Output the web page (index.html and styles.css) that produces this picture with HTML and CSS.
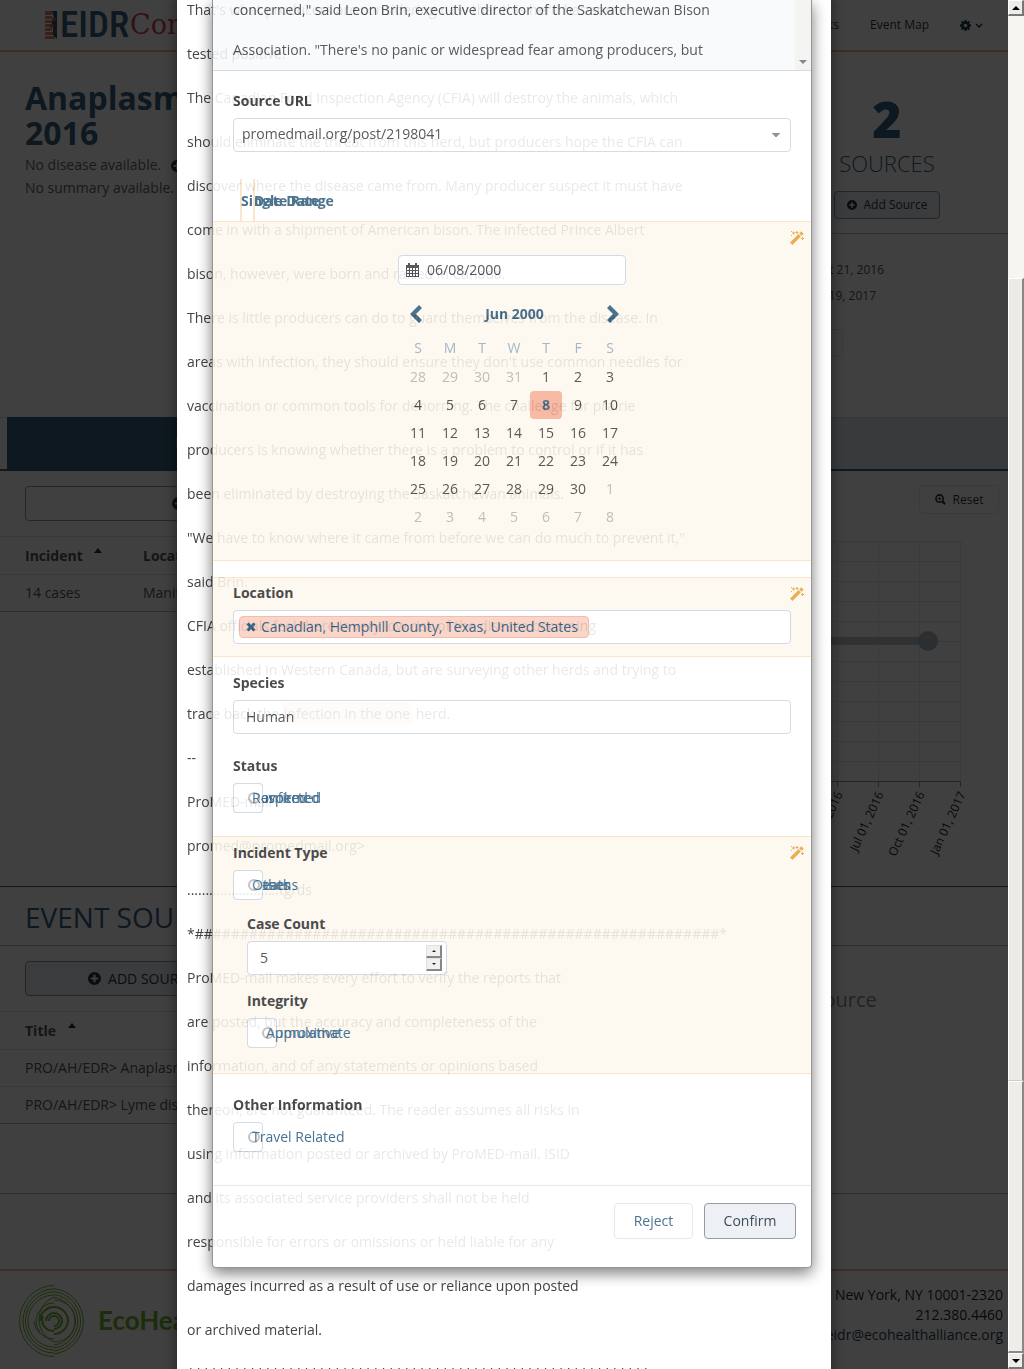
FILE: index.html
```html
<!DOCTYPE html>
<html lang="en">
<head>
<meta charset="utf-8">
<title>EIDR Connect</title>
<meta name="viewport" content="width=device-width, initial-scale=1">
<link rel="stylesheet" href="styles.css">
</head>
<body>
<svg class="defs" aria-hidden="true">
  <symbol id="plus" viewBox="0 0 12 12"><path fill-rule="evenodd" d="M6 0a6 6 0 1 0 0 12A6 6 0 0 0 6 0ZM5 2.600h2V5h2.400v2H7v2.400H5V7H2.600V5H5Z"/></symbol>
  <symbol id="wand" viewBox="0 0 14 14"><path d="M0 11.600 8.500 3.100l2.400 2.400L2.400 14ZM9.200 2.400 11.300.3l2.400 2.400-2.100 2.100ZM3 .6h1v1h1v1H4v1H3v-1H2v-1h1ZM6.500 0h1v1h1v1h-1v1h-1V2h-1V1h1ZM12 6h1v1h1v1h-1v1h-1V8h-1V7h1ZM1 0h1v1H1ZM1 4h1v1H1Z"/></symbol>
  <symbol id="chevron" viewBox="0 0 12 18"><path d="M3 0 12 9 3 18 0 15 6 9 0 3Z"/></symbol>
</svg>

<div class="page">
  <header class="topbar">
    <a class="brand" href="#">
      <svg class="brand-mark" width="12" height="28" viewBox="0 0 12 28" aria-hidden="true">
        <path fill="#d98963" d="M0 0h7v4H0zM0 5h7v3H0zM0 9h6v3H0zM0 13h6v3H0zM0 17h7v3H0zM0 21h8v3H0zM0 25h10v3H0z"/>
        <path fill="#2a5068" d="M7 0h5v28l-4-4V14L6 11l3-4Z"/>
        <circle cx="9" cy="8" r="2" fill="#d14b5e"/><circle cx="7" cy="15" r="2" fill="#d14b5e"/><circle cx="11" cy="20" r="1" fill="#d14b5e"/>
      </svg>
      <span class="brand-eidr">EIDR</span><span class="brand-connect">Connect</span>
    </a>
    <nav class="topnav">
      <a href="#">Events</a>
      <a href="#">Event Map</a>
      <a class="settings" href="#" aria-label="Settings">
        <svg width="11" height="11" viewBox="0 0 12 12"><path fill-rule="evenodd" d="M5 0h2l.3 1.600 1 .4L9.700 1 11 2.300 10 3.700l.4 1L12 5v2l-1.600.3-.4 1L11 9.700 9.700 11 8.300 10l-1 .4L7 12H5l-.3-1.600-1-.4L2.300 11 1 9.700 2 8.300l-.4-1L0 7V5l1.600-.3.4-1L1 2.300 2.300 1l1.400 1 1-.4ZM6 4a2 2 0 1 0 0 4 2 2 0 0 0 0-4Z"/></svg>
        <svg width="8" height="5" viewBox="0 0 8 5"><path d="m1 1 3 3 3-3" fill="none" stroke="currentColor" stroke-width="1.500"/></svg>
      </a>
    </nav>
  </header>

  <section class="summary">
    <div class="summary-text">
      <h1>Anaplasmosis<br>2016</h1>
      <p>No disease available. <svg class="icon" width="12" height="12"><use href="#plus"/></svg></p>
      <p>No summary available.</p>
    </div>
    <aside class="stats">
      <div class="stat">
        <strong>2</strong>
        <span>SOURCES</span>
        <button class="btn btn-small btn-fill" type="button"><svg class="icon" width="10" height="10"><use href="#plus"/></svg>Add Source</button>
      </div>
      <div class="dates">
        <p>Oct 21, 2016</p>
        <p>Jan 19, 2017</p>
        <button class="btn btn-small btn-details" type="button">Edit</button>
      </div>
    </aside>
  </section>

  <nav class="tabs">
    <a class="tab tab-on" href="#">Incidents</a>
    <a class="tab" href="#">Details</a>
  </nav>

  <section class="incidents">
    <div class="incident-list">
      <div class="tools"><button class="btn btn-wide" type="button"><svg class="icon" width="13" height="13"><use href="#plus"/></svg>Add Incident</button></div>
      <table class="list">
        <thead><tr><th class="col-name">Incident <span class="sort"></span></th><th>Location</th></tr></thead>
        <tbody><tr><td>14 cases</td><td>Manitoba</td></tr></tbody>
      </table>
    </div>
    <div class="plot">
      <button class="btn btn-small btn-reset" type="button"><svg class="icon" width="11" height="11" viewBox="0 0 12 12"><path d="m8 8 3 3" stroke="currentColor" stroke-width="2.500"/><circle cx="5" cy="5" r="4" fill="none" stroke="currentColor" stroke-width="1.800"/><path d="M5 3v4M3 5h4" stroke="currentColor"/></svg>Reset</button>
      <svg class="chart" width="220" height="330" viewBox="0 0 220 330">
        <path class="grid" d="M11.500 0V240M52.500 0V240M93.500 0V240M134.500 0V240M0 .5H134M0 20.500H134M0 40.500H134M0 60.500H134M0 80.500H134M0 100.500H134M0 120.500H134M0 140.500H134M0 160.500H134M0 180.500H134M0 200.500H134M0 220.500H134"/>
        <path class="axis" d="M0 240.500H134.500M11.500 240v6M52.500 240v6M93.500 240v6M134.500 240v6"/>
        <path class="span" d="M0 100H98"/><circle class="dot" cx="102" cy="100" r="10"/>
        <g class="ticks" text-anchor="end">
          <text transform="translate(17 253) rotate(-65)">Apr 01, 2016</text>
          <text transform="translate(58 253) rotate(-65)">Jul 01, 2016</text>
          <text transform="translate(99 253) rotate(-65)">Oct 01, 2016</text>
          <text transform="translate(140 253) rotate(-65)">Jan 01, 2017</text>
        </g>
      </svg>
    </div>
  </section>

  <section class="sources">
    <h2>EVENT SOURCES</h2>
    <div class="sources-body">
      <div class="source-list">
        <div class="tools"><button class="btn btn-source btn-fill" type="button"><svg class="icon" width="13" height="13"><use href="#plus"/></svg>ADD SOURCE</button></div>
        <table class="list">
          <thead><tr><th>Title <span class="sort"></span></th></tr></thead>
          <tbody><tr><td>PRO/AH/EDR&gt; Anaplasmosis</td></tr><tr><td>PRO/AH/EDR&gt; Lyme disease</td></tr></tbody>
        </table>
      </div>
      <p class="empty">Select a source</p>
    </div>
  </section>

  <footer class="footer">
    <a class="eco" href="#">
      <svg class="eco-rings" width="70" height="72" viewBox="-35 -36 70 72" aria-hidden="true">
        <path d="M0-35.500A34 35 0 0 0 0 35.500M0-32.500A33.500 33 0 0 1 0 33M0-32A31 32 0 0 0 0 32M0-29.500A30.500 30 0 0 1 0 30M0-29A28.500 29 0 0 0 0 29M0-26.500A27.500 27 0 0 1 0 27M0-26A26 26 0 0 0 0 26M0-23.500A24.500 24 0 0 1 0 24M0-24A23 24 0 0 0 0 21M0-21A21.500 21 0 0 1 0 21M0-18A18 18 0 0 0-14 11M-20 0A20 20 0 0 0 0 18"/>
        <path stroke-width="2" d="M-14 0A14 14 0 0 1 14 0A14 14 0 0 1 0 13M-11-5A11 11 0 0 0 0 10M-8 0A8 8 0 1 1 0 8M-5 0A5 5 0 1 1 0 5"/>
      </svg>
      <span>EcoHealth Alliance</span>
    </a>
    <address>
      New York, NY 10001-2320<br>212.380.4460<br><a href="#">eidr@ecohealthalliance.org</a>
    </address>
  </footer>
</div>

<div class="backdrop">
  <article class="article">
    <p>That's what producers are considering now that this herd has some</p>
    <p>tested positive.</p>
    <p>The Canadian Food Inspection Agency (CFIA) will destroy the animals, which</p>
    <p>should eliminate the threat from this herd, but producers hope the CFIA can</p>
    <p>discover where the disease came from. Many producer suspect it must have</p>
    <p>come in with a shipment of American bison. The infected Prince Albert</p>
    <p>bison, however, were born and raised in Canada.</p>
    <p>There is little producers can do to guard themselves from the disease. In</p>
    <p>areas with infection, they should ensure they don't use common needles for</p>
    <p>vaccination or common tools for dehorning. The challenge for prairie</p>
    <p>producers is knowing whether there is a problem to control or if it has</p>
    <p>been eliminated by destroying the Saskatchewan animals.</p>
    <p>"We have to know where it came from before we can do much to prevent it,"</p>
    <p>said Brin.</p>
    <p>CFIA officials feel there is very low risk of the disease becoming</p>
    <p>established in Western Canada, but are surveying other herds and trying to</p>
    <p>trace back the <mark>infection in the one</mark> herd.</p>
    <p>--</p>
    <p>ProMED-mail</p>
    <p>promed@promedmail.org&gt;</p>
    <p>.........................tg/ds</p>
    <p>*##########################################################*</p>
    <p>ProMED-mail makes every effort to verify the reports that</p>
    <p>are posted, but the accuracy and completeness of the</p>
    <p>information, and of any statements or opinions based</p>
    <p>thereon, are not guaranteed. The reader assumes all risks in</p>
    <p>using information posted or archived by ProMED-mail. ISID</p>
    <p>and its associated service providers shall not be held</p>
    <p>responsible for errors or omissions or held liable for any</p>
    <p>damages incurred as a result of use or reliance upon posted</p>
    <p>or archived material.</p>
    <p class="stars">************************************************************</p>
  </article>
</div>

<div class="dialog-layer">
  <form class="dialog" role="dialog" aria-label="Suggested incident">
    <div class="excerpt">
      <div class="excerpt-text">
        <p>concerned," said Leon Brin, executive director of the Saskatchewan Bison</p>
        <p>Association. "There's no panic or widespread fear among producers, but</p>
      </div>
      <div class="excerpt-bar"><span></span></div>
    </div>

    <div class="field field-url">
      <label for="url">Source URL</label>
      <select id="url" class="control select"><option>promedmail.org/post/2198041</option></select>
    </div>

    <div class="date-tabs">
      <button type="button">Single Date</button>
      <button type="button">Date Range</button>
    </div>

    <section class="suggested suggested-date">
      <svg class="wand" width="14" height="14"><use href="#wand"/></svg>
      <div class="picker">
        <div class="control date-box">
          <svg width="13" height="14" viewBox="0 0 13 14"><path fill-rule="evenodd" d="M0 2h2V0h2v2h5V0h2v2h2v12H0ZM1 5v2h2V5ZM4 5v2h2V5ZM7 5v2h2V5ZM10 5v2h2V5ZM1 8v2h2V8ZM4 8v2h2V8ZM7 8v2h2V8ZM10 8v2h2V8ZM1 11v2h2v-2ZM4 11v2h2v-2ZM7 11v2h2v-2ZM10 11v2h2v-2Z"/></svg>
          <input type="text" value="06/08/2000" aria-label="Date">
        </div>
        <div class="month">
          <button type="button" aria-label="Previous month"><svg class="flip" width="12" height="18"><use href="#chevron"/></svg></button>
          <strong>Jun 2000</strong>
          <button type="button" aria-label="Next month"><svg width="12" height="18"><use href="#chevron"/></svg></button>
        </div>
        <table class="days">
          <thead><tr><th>S</th><th>M</th><th>T</th><th>W</th><th>T</th><th>F</th><th>S</th></tr></thead>
          <tbody>
            <tr><td class="off">28</td><td class="off">29</td><td class="off">30</td><td class="off">31</td><td>1</td><td>2</td><td>3</td></tr>
            <tr><td>4</td><td>5</td><td>6</td><td>7</td><td class="on">8</td><td>9</td><td>10</td></tr>
            <tr><td>11</td><td>12</td><td>13</td><td>14</td><td>15</td><td>16</td><td>17</td></tr>
            <tr><td>18</td><td>19</td><td>20</td><td>21</td><td>22</td><td>23</td><td>24</td></tr>
            <tr><td>25</td><td>26</td><td>27</td><td>28</td><td>29</td><td>30</td><td class="off">1</td></tr>
            <tr><td class="off">2</td><td class="off">3</td><td class="off">4</td><td class="off">5</td><td class="off">6</td><td class="off">7</td><td class="off">8</td></tr>
          </tbody>
        </table>
      </div>
    </section>

    <section class="suggested suggested-location">
      <svg class="wand" width="14" height="14"><use href="#wand"/></svg>
      <h3>Location</h3>
      <div class="control tokens">
        <span class="token"><button type="button" aria-label="Remove"><svg width="10" height="10" viewBox="0 0 10 10"><path d="m1.500 1.500 7 7m0-7-7 7" stroke="currentColor" stroke-width="3"/></svg></button>Canadian, Hemphill County, Texas, United States</span>
      </div>
    </section>

    <div class="field field-species">
      <label for="species">Species</label>
      <input id="species" class="control" type="text" value="Human">
    </div>

    <div class="field field-status">
      <h3>Status</h3>
      <div class="choices">
        <label><input type="radio" name="status"><span>Suspected</span></label>
        <label><input type="radio" name="status"><span>Confirmed</span></label>
        <label><input type="radio" name="status"><span>Revoked</span></label>
      </div>
    </div>

    <section class="suggested suggested-type">
      <svg class="wand" width="14" height="14"><use href="#wand"/></svg>
      <h3>Incident Type</h3>
      <div class="choices">
        <label><input type="radio" name="type"><span>Cases</span></label>
        <label><input type="radio" name="type"><span>Deaths</span></label>
        <label><input type="radio" name="type"><span>Other</span></label>
      </div>
      <div class="nested">
        <label for="count">Case Count</label>
        <div class="control count">
          <input id="count" type="text" inputmode="numeric" value="5">
          <span class="spin"><button class="more" type="button" aria-label="Increase"></button><button class="less" type="button" aria-label="Decrease"></button></span>
        </div>
      </div>
      <div class="nested nested-last">
        <h3>Integrity</h3>
        <div class="choices">
          <label><input type="checkbox"><span>Cumulative</span></label>
          <label><input type="checkbox"><span>Approximate</span></label>
        </div>
      </div>
    </section>

    <div class="field field-other">
      <h3>Other Information</h3>
      <div class="choices"><label><input type="checkbox"><span>Travel Related</span></label></div>
    </div>

    <footer class="dialog-foot">
      <button class="btn btn-reject" type="button">Reject</button>
      <button class="btn btn-confirm" type="submit">Confirm</button>
    </footer>
  </form>
</div>

<div class="scroll" aria-hidden="true">
  <span class="scroll-key"><i class="up"></i></span>
  <span class="scroll-space"></span>
  <span class="scroll-thumb"></span>
  <span class="scroll-rest"></span>
  <span class="scroll-key"><i class="down"></i></span>
</div>
</body>
</html>
```

FILE: styles.css
```css
:root {
  --navy: #34607f;
  --ink: #444;
  --orange: #f0b09a;
  --line: #e2e6ec;
  --edge: #ccd7e3;
  --amber: #fae3c3;
  --bar: 16px;
}
* { box-sizing: border-box; }
html, body { height: 100%; }
body {
  margin: 0;
  overflow: hidden;
  color: var(--ink);
  font: 14px/20px "Open Sans", "Noto Sans", sans-serif;
}
p, h1, h2, h3 { margin: 0; }
button, input, select { font: inherit; color: inherit; }
button { padding: 0; border: 0; background: none; }
a { color: inherit; text-decoration: none; }
.defs { position: absolute; width: 0; height: 0; }
svg { fill: currentColor; flex: none; }

/* Page under the dialogs */
.page {
  display: flex;
  flex-direction: column;
  min-height: 100%;
  margin-right: var(--bar);
  background: #fff;
}
.topbar {
  display: flex;
  justify-content: space-between;
  align-items: center;
  height: 52px;
  padding: 0 25px 0 45px;
  border-bottom: 2px solid var(--orange);
}
.brand { display: flex; align-items: center; }
.brand-eidr { margin-left: 3px; font: 500 37px/38px "Roboto Condensed", "Liberation Sans Narrow", Roboto, sans-serif; color: var(--navy); }
.brand-connect { margin-left: 1px; font: 27px/38px "DejaVu Serif", serif; color: #c8445a; }
.topnav { display: flex; gap: 31px; font-size: 12px; color: #1f3a4c; }
.settings { display: flex; gap: 4px; align-items: center; }
.icon { vertical-align: -1px; margin-right: 7px; }

.summary { display: flex; justify-content: space-between; min-height: 365px; }
.summary-text { padding: 28px 25px; color: #666; }
.summary-text h1 { margin-bottom: 3px; font-size: 32px; line-height: 35px; font-weight: 700; color: var(--navy); }
.summary-text p { line-height: 23px; }
.summary-text .icon { margin-left: 6px; color: #333; vertical-align: -2px; }
.stats { width: 242px; }
.stat {
  display: flex;
  flex-direction: column;
  align-items: center;
  padding: 37px 0 14px;
  border-bottom: 1px solid var(--orange);
  color: var(--navy);
}
.stat strong { font-size: 50px; line-height: 60px; font-weight: 800; }
.stat span { margin: 1px 0 14px; font-size: 22px; line-height: 27px; font-weight: 300; }
.dates { padding: 23px 0; font-size: 12px; color: #555; }
.dates p { width: 118px; line-height: 26px; text-align: right; }
.dates p + p { width: 110px; }
.btn {
  display: inline-flex;
  align-items: center;
  justify-content: center;
  border: 1px solid var(--line);
  border-radius: 4px;
  color: #1f3a4c;
}
.btn-small { height: 28px; font-size: 12px; }
.btn-fill { background: #ebeff5; border-color: #8d97a2; }
.stat .btn { width: 106px; }
.btn-details { width: 77px; margin-top: 20px; padding-right: 30px; }

.tabs { display: flex; height: 54px; padding-left: 7px; border-top: 1px solid #d5dae0; border-bottom: 2px solid var(--navy); }
.tab { flex: 1; padding: 15px; background: #e3e8ee; text-align: center; }
.tab-on { flex: none; width: 40%; margin: -1px 0 -2px; background: var(--navy); color: #fff; font-size: 15px; }

.incidents { display: flex; justify-content: space-between; }
.incident-list, .source-list { width: 48%; }
.tools { padding: 15px 25px; }
.btn-wide { width: 396px; height: 35px; border-color: #8d97a2; }
.btn-source { width: 233px; height: 35px; }
.list { width: 100%; border-collapse: collapse; color: #555; border-bottom: 1px solid #b4bac0; }
.list tr { height: 37px; border-top: 1px solid #ddd; }
.list thead tr { height: 38px; }
.list th, .list td { padding: 8px 0 8px 25px; text-align: left; }
.list .col-name { width: 143px; }
.list .col-name ~ th, .list td + td { padding-left: 0; }
.sort { display: inline-block; margin: 0 0 8px 8px; border: 4px solid transparent; border-top: 0; border-bottom: 5px solid #333; }
.plot { width: 182px; height: 415px; padding-top: 14px; }
.btn-reset { display: flex; width: 80px; height: 29px; margin: 0 9px 27px auto; }
.chart { display: block; overflow: visible; }
.grid, .axis { fill: none; stroke: #e8e8e8; }
.axis { stroke: #8896a8; }
.span { stroke: #bac4cc; stroke-width: 8; }
.dot { fill: #afbcc6; }
.ticks { font-size: 12px; fill: #222; }

.sources { border-top: 1px solid var(--navy); border-bottom: 1px solid #b4bac0; flex: 1; }
.sources h2 { padding: 14px 25px 12px; border-bottom: 1px solid #b4bac0; font-size: 28px; line-height: 32px; font-weight: 400; color: var(--navy); }
.sources-body { display: flex; min-height: 247px; }
.empty { width: 393px; padding-top: 44px; text-align: right; font-size: 20px; color: #8a8a8a; }
.footer {
  display: flex;
  justify-content: space-between;
  margin-top: 75px;
  min-height: 100px;
  padding: 14px 5px 0 19px;
  border-top: 2px solid var(--orange);
}
.eco { display: flex; gap: 9px; color: #6fb52e; font: bold 26px/70px Lato, sans-serif; }
.eco-rings { fill: none; stroke: #6fb52e; }
.footer address { font-style: normal; text-align: right; color: #1b2b38; }
.footer address a { color: #1f3f58; }

/* Source article */
.backdrop, .dialog-layer { position: fixed; inset: 0; overflow: hidden; }
.backdrop { padding-right: var(--bar); background: rgba(0, 0, 0, .75); }
.article {
  width: 654px;
  max-width: 100%;
  min-height: 100%;
  margin: 0 auto;
  margin-top: -12px;
  padding: 0 10px;
  background: #fff;
  box-shadow: 0 5px 15px rgba(0, 0, 0, .5);
}
.article p { line-height: 44px; white-space: nowrap; }
.article mark { padding: 2px 2px 2px 1px; border-radius: 3px; background: #f9d9d5; color: inherit; }

/* Incident dialog */
.dialog {
  width: 600px;
  max-width: 100%;
  margin: 0 auto;
  border: 1px solid #888;
  border-top: 0;
  border-radius: 0 0 4px 4px;
  background: #fff;
  box-shadow: 0 5px 15px rgba(0, 0, 0, .6);
  opacity: .88;
}
.excerpt { display: flex; justify-content: space-between; height: 71px; border-bottom: 1px solid var(--edge); background: #f8fafc; }
.excerpt-text { padding-left: 20px; margin-top: -10px; line-height: 40px; white-space: nowrap; }
.excerpt-bar { display: flex; align-items: flex-end; justify-content: center; width: 16px; padding-bottom: 6px; background: #f3f3f1; }
.excerpt-bar span { border: 4px solid transparent; border-top-color: #777; border-bottom: 0; }
.dialog h3, .field > label, .nested > label { display: block; margin-bottom: 7px; font-size: 14px; line-height: 20px; font-weight: 700; color: #333; }
.field { padding: 0 20px; }
.field-url { padding-top: 20px; }
.control {
  display: block;
  width: 100%;
  height: 34px;
  padding: 0 12px 2px;
  border: 1px solid var(--edge);
  border-radius: 4px;
  background: #fff;
}
.select {
  appearance: none;
  padding: 0 8px 2px;
  background: linear-gradient(to top right, transparent 50%, #888 50%) no-repeat right 14px center / 4px 5px,
    linear-gradient(to top left, transparent 50%, #888 50%) no-repeat right 10px center / 4px 5px, #fff;
}
.date-tabs { display: flex; padding: 27px 27px 0; }
.date-tabs button {
  width: 13px;
  height: 42px;
  padding-top: 2px;
  border-left: 2px solid var(--amber);
  font-weight: 700;
  color: var(--navy);
  text-align: left;
  text-indent: -1px;
  white-space: nowrap;
}
.suggested { position: relative; padding: 5px 20px 12px; border: solid var(--amber); border-width: 1px 0; background: #fdf7ee; }
.wand { position: absolute; top: 9px; right: 7px; color: #e8a33d; }
.suggested-date { padding: 33px 0 29px; }
.picker { width: 228px; margin: 0 auto; }
.date-box { display: flex; align-items: center; gap: 8px; height: 30px; padding: 0 7px; }
.date-box input, .count input { flex: 1; min-width: 0; padding: 0; border: 0; background: none; }
.month { display: flex; justify-content: space-between; align-items: center; height: 34px; margin: 12px 7px 0 12px; color: var(--navy); }
.month button { display: flex; }
.flip { transform: scaleX(-1); }
.days { width: 224px; margin-left: 4px; border-collapse: collapse; table-layout: fixed; text-align: center; }
.days th { height: 32px; padding: 2px 0 0; font-weight: 400; color: #98aec3; }
.days td { height: 28px; padding: 0; }
.days .off { color: #b5b5b5; }
.days .on { border-radius: 4px; background: #f8b199; font-weight: 700; color: var(--navy); }
.suggested-location { margin-top: 16px; }
.tokens { padding: 5px; }
.token {
  display: inline-flex;
  align-items: center;
  gap: 5px;
  height: 22px;
  padding: 0 10px 0 6px;
  border: 1px solid #f5b39c;
  border-radius: 4px;
  background: #fad0c3;
  color: #26567a;
  white-space: nowrap;
}
.token button { display: flex; }
.field-species { padding-top: 16px; }
.field-status { padding-top: 22px; padding-bottom: 23px; }

/* Every choice of a group shares one cell, the last one on top */
.choices { display: grid; width: 30px; }
.choices label {
  grid-area: 1 / 1;
  position: relative;
  display: flex;
  align-items: center;
  width: 30px;
  height: 30px;
  padding-left: 14px;
  border: 1px solid var(--edge);
  border-radius: 4px;
  background: #fff;
  color: #2e6084;
  white-space: nowrap;
}
.choices input { appearance: none; flex: none; width: 12px; height: 12px; margin: 0 -8px 0 0; border: 2px solid #bbb; border-radius: 50%; }
.suggested-type { padding-top: 6px; padding-bottom: 25px; }
.nested { padding: 14px 0 0 14px; }
.nested-last { padding-top: 16px; }
.count { display: flex; align-items: center; width: 200px; padding: 0 4px 0 12px; }
.spin { display: flex; flex-direction: column; width: 16px; }
.spin button { display: flex; align-items: center; justify-content: center; height: 13px; border: 1px solid #ddd; border-right: 2px solid #777; border-bottom: 2px solid #777; background: #f0eeea; }
.spin button::after { content: ""; border: 2px solid transparent; }
.spin .more::after { border-top: 0; border-bottom-color: #000; }
.spin .less::after { border-bottom: 0; border-top-color: #000; }
.field-other { padding-top: 21px; padding-bottom: 33px; }
.dialog-foot { display: flex; justify-content: flex-end; gap: 11px; padding: 17px 15px 28px; border-top: 1px solid #e5e5e5; }
.dialog-foot .btn { height: 36px; color: var(--navy); }
.btn-reject { width: 79px; }
.dialog-foot .btn-confirm { width: 92px; border-color: #888f96; background: #ebeff5; color: #234; }

/* Window scroll bar */
.scroll { position: fixed; inset: 0 0 0 auto; display: flex; flex-direction: column; width: var(--bar); background: #f6f5f2; }
.scroll-key { display: flex; align-items: center; justify-content: center; height: 16px; border: 1px solid #fff; border-right: 2px solid #777; border-bottom: 2px solid #777; background: #efedea; }
.scroll-key i { border: 4px solid transparent; }
.scroll-key .up { border-top-width: 0; border-bottom-color: #000; }
.scroll-key .down { border-bottom-width: 0; border-top-color: #000; }
.scroll-space { flex: 263; }
.scroll-thumb { flex: 804; border: 1px solid #fff; border-right: 2px solid #888; border-bottom: 1px solid #ccc; background: #eeebe7; }
.scroll-rest { flex: 270; border: 1px solid #fff; border-right: 2px solid #888; border-bottom: 2px solid #888; background: #f0ede8; }
```
